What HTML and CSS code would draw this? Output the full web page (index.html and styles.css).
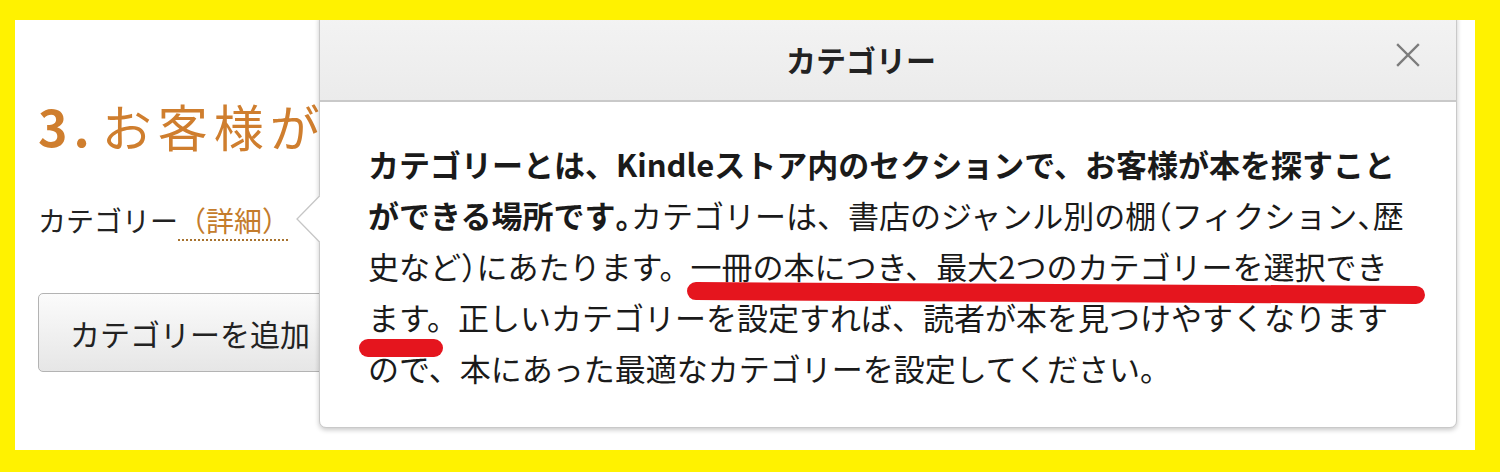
FILE: index.html
```html
<!DOCTYPE html>
<html lang="ja">
<head>
<meta charset="utf-8">
<title>カテゴリー</title>
<link rel="stylesheet" href="styles.css">
</head>
<body>
<div class="frame">
  <div class="stage">
    <div class="section">
      <h3 class="heading"><span class="num">3.</span>お客様が</h3>
      <div class="label">カテゴリー<a class="detail">（詳細）</a></div>
      <button class="add-btn">カテゴリーを追加</button>
    </div>

    <div class="popover">
      <svg class="pointer" width="24" height="48" viewBox="0 0 24 48">
        <polygon points="24,0 1,24 24,48" fill="#ffffff"/>
        <polyline points="24,0.5 1,24 24,47.5" fill="none" stroke="#c6c6c6" stroke-width="1.3"/>
      </svg>
      <div class="pop-header">
        <span class="pop-title">カテゴリー</span>
        <svg class="close" width="26" height="26" viewBox="0 0 26 26">
          <path d="M3 3 L23 23 M23 3 L3 23" stroke="#7c7c7c" stroke-width="2.4" stroke-linecap="square" fill="none"/>
        </svg>
      </div>
      <div class="pop-body">
        <p class="desc"><strong>カテゴリーとは、Kindleストア内のセクションで、お客様が本を探すこと<br>ができる場所です<span class="tight">。</span></strong>カテゴリーは、書店のジャンル別の棚<span class="tight">（</span>フィクション<span class="tight">、</span>歴<br>史など<span class="tight">）</span>にあたります。一冊の本につき、最大2つのカテゴリーを選択でき<br>ます。正しいカテゴリーを設定すれば、読者が本を見つけやすくなります<br>ので、本にあった最適なカテゴリーを設定してください。</p>
      </div>
    </div>

    <span class="mark mark-long"></span>
    <span class="mark mark-short"></span>
  </div>
</div>
</body>
</html>
```

FILE: styles.css
```css
html, body {
  margin: 0;
  padding: 0;
}

body {
  background: #fff200;
  font-family: "Noto Sans CJK JP", "Noto Sans", sans-serif;
  color: #1e1e1e;
}

.frame {
  width: 1500px;
  height: 472px;
  box-sizing: border-box;
  padding: 20px 25px 22px 15px;
}

.stage {
  position: relative;
  width: 1460px;
  height: 430px;
  background: #ffffff;
  overflow: hidden;
}

.section {
  padding: 80px 0 0 23px;
  display: flex;
  flex-direction: column;
  align-items: flex-start;
  white-space: nowrap;
}

.heading {
  margin: 0;
  font-size: 50px;
  line-height: 50px;
  font-weight: 400;
  letter-spacing: 6px;
  color: #cf7e2e;
}

.heading .num {
  font-weight: 700;
  margin-right: 6px;
}

.label {
  margin-top: 56px;
  font-size: 28px;
  line-height: 28px;
  color: #222;
}

.detail {
  color: #c47c2c;
  text-decoration: underline dotted #a8732f;
  text-decoration-thickness: 2px;
  text-underline-offset: 7px;
}

.add-btn {
  margin-top: 59px;
  width: 320px;
  height: 79px;
  box-sizing: border-box;
  padding: 0 0 0 31px;
  text-align: left;
  font-family: inherit;
  font-size: 30px;
  line-height: 30px;
  color: #222;
  background: linear-gradient(#fbfbfb, #e6e6e6);
  border: 1px solid #b3b3b3;
  border-radius: 5px;
}

.popover {
  position: absolute;
  left: 304px;
  top: -4px;
  width: 1138px;
  height: 412px;
  box-sizing: border-box;
  background: #ffffff;
  border: 1px solid #c9c9c9;
  border-radius: 0 0 7px 7px;
  box-shadow: 0 2px 5px rgba(0, 0, 0, 0.22);
}

.pointer {
  position: absolute;
  left: -24px;
  top: 178px;
}

.pop-header {
  position: relative;
  height: 83px;
  border-bottom: 2px solid #c9c9c9;
  background: linear-gradient(#f3f3f3, #ebebeb);
  display: flex;
  align-items: center;
  justify-content: center;
  padding-right: 54px;
}

.pop-title {
  font-size: 30px;
  line-height: 30px;
  font-weight: 700;
  color: #222;
}

.close {
  position: absolute;
  right: 35px;
  top: 25px;
}

.pop-body {
  padding: 36px 0 0 48px;
}

.desc {
  margin: 0;
  font-size: 31px;
  line-height: 51px;
  white-space: nowrap;
  color: #1a1a1a;
}

.desc strong {
  font-weight: 700;
}

.tight {
  font-feature-settings: "halt";
}

.mark {
  position: absolute;
  background: #e5151e;
  border-radius: 9px;
}

.mark-long {
  left: 672px;
  top: 264px;
  width: 738px;
  height: 18px;
  transform: rotate(0.3deg);
}

.mark-short {
  left: 344px;
  top: 319px;
  width: 84px;
  height: 18px;
}
```
